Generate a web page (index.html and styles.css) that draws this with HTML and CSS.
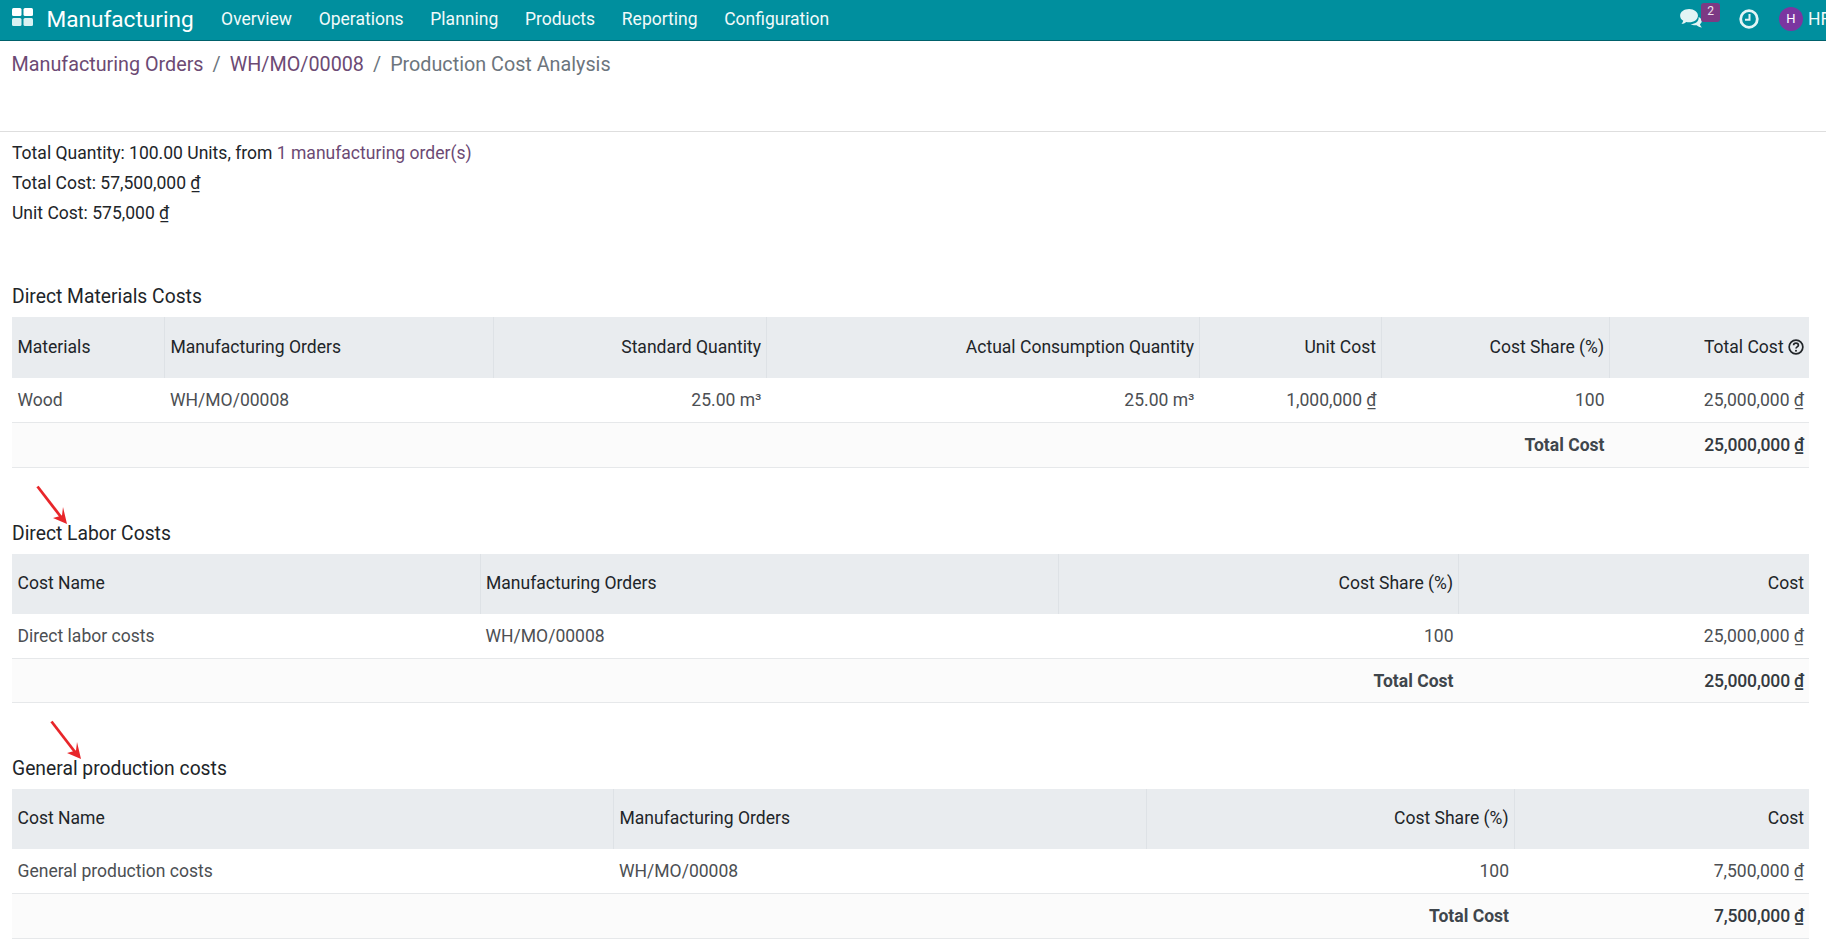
FILE: index.html
```html
<!DOCTYPE html>
<html lang="en">
<head>
<meta charset="utf-8">
<title>Production Cost Analysis</title>
<link rel="stylesheet" href="styles.css">
</head>
<body>
<header class="navbar">
  <svg class="apps" viewBox="0 0 21 18" width="21" height="18"><rect x="0" y="0" width="9.5" height="8" rx="1.5" fill="#fff"/><rect x="11.5" y="0" width="9.5" height="8" rx="1.5" fill="#fff"/><rect x="0" y="10" width="9.5" height="8" rx="1.5" fill="#d9f1f2"/><rect x="11.5" y="10" width="9.5" height="8" rx="1.5" fill="#d9f1f2"/></svg>
  <span class="brand">Manufacturing</span>
  <nav class="menu">
    <span>Overview</span><span>Operations</span><span>Planning</span><span>Products</span><span>Reporting</span><span>Configuration</span>
  </nav>
  <div class="systray">
    <span class="chat">
      <svg viewBox="0 0 24 20" width="23" height="19"><path d="M19.500 8.500C21.500 9.500 22.800 11 22.800 12.700c0 1.300-.7 2.400-1.900 3.300.3 1.200 1 2.400 2.100 3.500-2.300-.2-4.300-1.200-5.600-2.500-1 .2-2 .2-3 .1-1.300-.2-2.500-.6-3.400-1.200 5 .1 9-2.700 8.500-7.400z" fill="#e3f4f5"/><path d="M9.500 0C4.300 0 0 3 0 7c0 2.200 1.300 4.100 3.300 5.400-.3 1.200-1 2.300-1.900 3.200 1.900 0 3.700-.8 5.100-2 .9.200 1.900.3 3 .3 5.200 0 9.300-3 9.300-6.900S14.700 0 9.500 0z" fill="#e3f4f5"/></svg>
      <span class="badge">2</span>
    </span>
    <svg class="clock" viewBox="0 0 20 20" width="20" height="20"><circle cx="10" cy="10" r="8.300" fill="none" stroke="#e3f4f5" stroke-width="2.800"/><path d="M10.500 5v5.800H6" fill="none" stroke="#e3f4f5" stroke-width="2"/></svg>
    <span class="avatar">H</span>
    <span class="user">HR</span>
  </div>
</header>

<div class="control">
  <ol class="crumbs">
    <li class="link">Manufacturing Orders</li>
    <li class="sep">/</li>
    <li class="link">WH/MO/00008</li>
    <li class="sep">/</li>
    <li class="current">Production Cost Analysis</li>
  </ol>
</div>

<main class="report">
  <div class="summary">
    <p>Total Quantity: 100.00 Units, from <a class="link">1 manufacturing order(s)</a></p>
    <p>Total Cost: 57,500,000 ₫</p>
    <p>Unit Cost: 575,000 ₫</p>
  </div>

  <h3 class="title first">Direct Materials Costs</h3>
  <table class="grid t1">
    <colgroup><col class="c1"><col class="c2"><col class="c3"><col class="c4"><col class="c5"><col class="c6"><col></colgroup>
    <thead><tr><th>Materials</th><th>Manufacturing Orders</th><th class="num">Standard Quantity</th><th class="num">Actual Consumption Quantity</th><th class="num">Unit Cost</th><th class="num">Cost Share (%)</th><th class="num">Total Cost <svg class="help" viewBox="0 0 14 14" width="16" height="16"><circle cx="7" cy="7" r="6" fill="none" stroke="#212529" stroke-width="1.500"/><path d="M4.900 5.500c0-1.200 1-1.900 2.100-1.900s2.100.7 2.100 1.800c0 1.500-2.100 1.500-2.100 3" fill="none" stroke="#212529" stroke-width="1.500"/><circle cx="7" cy="10.300" r=".9" fill="#212529"/></svg></th></tr></thead>
    <tbody><tr><td>Wood</td><td>WH/MO/00008</td><td class="num">25.00 m³</td><td class="num">25.00 m³</td><td class="num">1,000,000 ₫</td><td class="num">100</td><td class="num">25,000,000 ₫</td></tr></tbody>
    <tfoot><tr><td colspan="5"></td><td class="num">Total Cost</td><td class="num amount">25,000,000 ₫</td></tr></tfoot>
  </table>

  <h3 class="title">Direct Labor Costs</h3>
  <table class="grid t2">
    <colgroup><col class="c1"><col class="c2"><col class="c3"><col></colgroup>
    <thead><tr><th>Cost Name</th><th>Manufacturing Orders</th><th class="num">Cost Share (%)</th><th class="num">Cost</th></tr></thead>
    <tbody><tr><td>Direct labor costs</td><td>WH/MO/00008</td><td class="num">100</td><td class="num">25,000,000 ₫</td></tr></tbody>
    <tfoot><tr><td colspan="2"></td><td class="num">Total Cost</td><td class="num amount">25,000,000 ₫</td></tr></tfoot>
  </table>

  <h3 class="title">General production costs</h3>
  <table class="grid t3">
    <colgroup><col class="c1"><col class="c2"><col class="c3"><col></colgroup>
    <thead><tr><th>Cost Name</th><th>Manufacturing Orders</th><th class="num">Cost Share (%)</th><th class="num">Cost</th></tr></thead>
    <tbody><tr><td>General production costs</td><td>WH/MO/00008</td><td class="num">100</td><td class="num">7,500,000 ₫</td></tr></tbody>
    <tfoot><tr><td colspan="2"></td><td class="num">Total Cost</td><td class="num amount">7,500,000 ₫</td></tr></tfoot>
  </table>
</main>

<svg class="arrow a1" viewBox="0 0 34 42" width="34" height="42"><path d="M1.500 1.500L25 32" stroke="#e8262a" stroke-width="2.800" fill="none"/><path d="M31 39L17 33L26 30.500L27 22z" fill="#e8262a"/></svg>
<svg class="arrow a2" viewBox="0 0 34 42" width="34" height="42"><path d="M1.500 1.500L25 32" stroke="#e8262a" stroke-width="2.800" fill="none"/><path d="M31 39L17 33L26 30.500L27 22z" fill="#e8262a"/></svg>
</body>
</html>
```
FILE: styles.css
```css
* { box-sizing: border-box; }
html, body { margin: 0; height: 944px; overflow: hidden; background: #fff; }
body { font-family: Roboto, "Liberation Sans", sans-serif; font-size: 17.550px; color: #212529; position: relative; }

.navbar { display: flex; align-items: center; height: 41px; background: #008f9e; border-bottom: 1px solid #00616b; color: #f2fafa; padding-left: 12px; overflow: hidden; white-space: nowrap; }
.apps { flex: none; margin-top: -6px; }
.brand { font-size: 22.600px; margin-left: 13.500px; color: #fff; margin-top: -2px; }
.menu { display: flex; gap: 26.700px; margin-left: 27.500px; font-size: 17.500px; margin-top: -3px; }
.systray { display: flex; align-items: center; margin-left: auto; width: 146px; flex: none; margin-top: -3px; }
.chat { position: relative; display: flex; width: 59px; flex: none; }
.badge { position: absolute; left: 21px; top: -6px; width: 19px; height: 19px; background: #7c3a84; border-radius: 3px; font-size: 12px; text-align: center; line-height: 17px; color: #f0e4f0; }
.clock { flex: none; }
.avatar { flex: none; width: 24px; height: 24px; margin-left: 20px; border-radius: 50%; background: #7b36a0; color: #fff; font-size: 13px; font-weight: 400; text-align: center; line-height: 24px; }
.user { margin-left: 5px; font-size: 17.500px; flex: none; }

.control { height: 91px; border-bottom: 1px solid #dedede; padding: 12px 12px 0 11.500px; }
.crumbs { display: flex; gap: 9px; list-style: none; margin: 0; padding: 0; font-size: 19.750px; line-height: 24px; }
.link { color: #6c4a74; }
.sep, .current { color: #6c757d; }

.report { padding: 0 17px 0 12px; }
.summary { padding-top: 6px; }
.summary p { margin: 0; height: 30px; line-height: 30px; }
.title { margin: 0; font-size: 19.300px; font-weight: 400; line-height: 24px; padding-top: 54px; padding-bottom: 8px; }
.title.first { padding-top: 57px; }

.grid { width: 100%; border-collapse: collapse; table-layout: fixed; font-size: 17.550px; }
.grid th { height: 60px; background: #e9ecef; font-weight: 400; text-align: left; padding: 0 5px 2px 5.500px; border-left: 1px solid #dee2e6; color: #212529; }
.grid th:first-child { border-left: 0; }
.grid td { height: 44px; padding: 0 5px 0 5.500px; color: #4c4f53; border-bottom: 1px solid #e6e8ea; }
.grid tfoot td { height: 45px; background: #fbfbfb; font-weight: 700; color: #3f464c; }
.grid tfoot .amount { font-weight: 500; color: #343a40; letter-spacing: -.2px; }
.grid .num { text-align: right; }
.help { vertical-align: -2px; }

.t1 th { height: 61px; }
.t2 tbody td { height: 45px; }
.t2 tfoot td { height: 44px; }
.t1 .c1 { width: 152.500px; }
.t1 .c2 { width: 329px; }
.t1 .c3 { width: 273px; }
.t1 .c4 { width: 433px; }
.t1 .c5 { width: 182px; }
.t1 .c6 { width: 228px; }
.t2 .c1 { width: 468px; }
.t2 .c2 { width: 578.500px; }
.t2 .c3 { width: 400px; }
.t3 .c1 { width: 601.500px; }
.t3 .c2 { width: 532.500px; }
.t3 .c3 { width: 368px; }

.arrow { position: absolute; pointer-events: none; }
.a1 { left: 36px; top: 485px; }
.a2 { left: 50px; top: 720px; }
```
